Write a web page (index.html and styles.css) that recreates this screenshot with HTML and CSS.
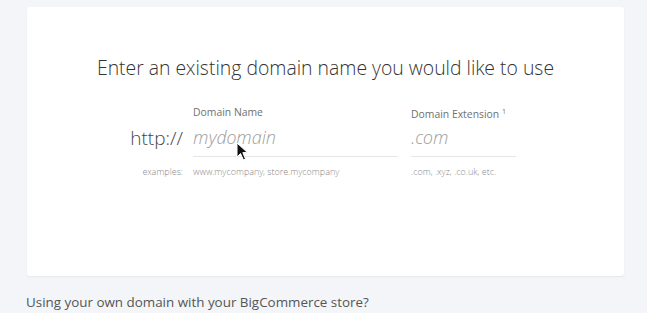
FILE: index.html
```html
<!DOCTYPE html>
<html>
<head>
<meta charset="utf-8">
<link rel="stylesheet" href="styles.css">
</head>
<body>
<div class="page">
  <div class="card">
    <h1 class="title">Enter an existing domain name you would like to use</h1>
    <div class="form">
      <div class="col col-prefix">
        <div class="label">&nbsp;</div>
        <div class="prefix">http://</div>
        <div class="hint">examples:</div>
      </div>
      <div class="col col-name">
        <div class="label">Domain Name</div>
        <div class="input">mydomain</div>
        <div class="hint">www.mycompany, store.mycompany</div>
      </div>
      <div class="col col-ext">
        <div class="label">Domain Extension <sup>1</sup></div>
        <div class="input">.com</div>
        <div class="hint">.com, .xyz, .co.uk, etc.</div>
      </div>
    </div>
  </div>
  <p class="footer-q">Using your own domain with your BigCommerce store?</p>
  <svg class="cursor" width="14" height="20" viewBox="0 0 14 20"><path d="M1 1 L1 15 L4.5 11.5 L7.5 18 L9.5 17 L6.8 10.6 L11.5 10.6 Z" fill="#111" stroke="#fff" stroke-width="1"/></svg>
</div>
</body>
</html>
```
FILE: styles.css
```css
* { box-sizing: border-box; }
html, body { margin: 0; padding: 0; }
body {
  background: #f3f5f8;
  font-family: "Open Sans Light", "Open Sans", "Liberation Sans", sans-serif;
  width: 647px;
  height: 313px;
  overflow: hidden;
}
.page {
  position: relative;
  padding: 7px 23px 0 27px;
}
.card {
  background: #fff;
  height: 269px;
  border-radius: 3px;
  box-shadow: 0 1px 2px rgba(0,0,0,0.06);
  padding-top: 47px;
}
.title {
  margin: 0;
  text-align: center;
  font-weight: 300;
  font-size: 19.4px;
  line-height: 28px;
  color: #333;
}
.form {
  display: flex;
  margin-top: 23px;
  padding-left: 103px;
}
.col { display: flex; flex-direction: column; }
.label {
  font-family: "Open Sans", "Liberation Sans", sans-serif;
  font-size: 10.4px;
  line-height: 14px;
  color: #707070;
  height: 14px;
  font-weight: 400;
}
.label sup { font-size: 7px; vertical-align: 4px; }
.prefix {
  margin-top: 7px;
  height: 24px;
  font-size: 19px;
  line-height: 24px;
  color: #444;
  font-weight: 300;
}
.input {
  margin-top: 7px;
  height: 31px;
  font-size: 18px;
  line-height: 22px;
  font-style: italic;
  font-weight: 300;
  color: #9d9d9d;
  border-bottom: 1px solid #e6e6e6;
}
.hint {
  margin-top: 9px;
  font-size: 9px;
  line-height: 12px;
  color: #888;
  font-weight: 300;
}
.col-prefix .hint { margin-top: 16px; }
.col-prefix { width: 63px; align-items: flex-end; padding-right: 10px; }
.col-name { width: 205px; }
.col-ext { width: 105px; margin-left: 13px; }
.footer-q {
  margin: 16px 0 0 -1px;
  font-family: "Open Sans", "Liberation Sans", sans-serif;
  font-size: 13.4px;
  line-height: 20px;
  color: #555;
  font-weight: 400;
}
.cursor {
  position: absolute;
  left: 236px;
  top: 142px;
}
```
